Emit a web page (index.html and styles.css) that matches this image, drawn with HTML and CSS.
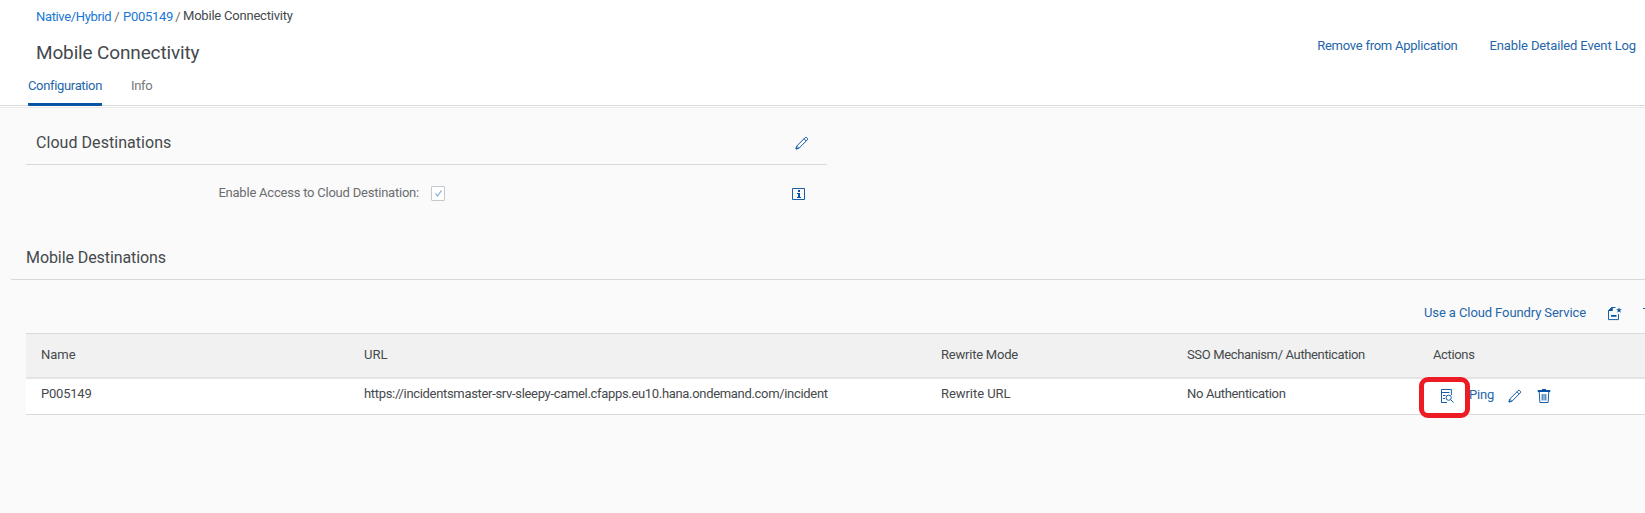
FILE: index.html
```
<!DOCTYPE html>
<html lang="en">
<head>
<meta charset="utf-8">
<title>Mobile Connectivity</title>
<link rel="stylesheet" href="styles.css">
</head>
<body>
<header class="page-header">
  <nav class="crumbs"><a class="crumb-link">Native/Hybrid</a><span class="sep">/</span><a class="crumb-id">P005149</a><span class="sep">/</span><span class="crumb-current">Mobile Connectivity</span></nav>
  <div class="title-row">
    <h1 class="title">Mobile Connectivity</h1>
    <div class="header-actions"><a class="remove">Remove from Application</a><a class="eventlog">Enable Detailed Event Log</a></div>
  </div>
  <div class="tabs"><a class="tab active">Configuration</a><a class="tab">Info</a></div>
</header>
<main class="content">
  <section class="cloud">
    <div class="cloud-head">
      <h2 class="heading cloud-title">Cloud Destinations</h2>
      <svg class="icon pencil" width="16" height="16" viewBox="0 0 16 16"><path d="M2 14l.7-2.9 8.4-8.4a1.2 1.2 0 0 1 1.7 0l.5.5a1.2 1.2 0 0 1 0 1.7l-8.4 8.4zM10 3.8l2.2 2.2M2.7 11.1l2.2 2.2M2 14l1.5-.4-1-1z"/></svg>
    </div>
    <div class="cloud-row">
      <span class="label">Enable Access to Cloud Destination:</span>
      <span class="checkbox"><svg width="9" height="9" viewBox="0 0 9 9"><path d="M1.5 4.5l2 2.5 4-5.5"/></svg></span>
      <svg class="icon info" width="14" height="14" viewBox="0 0 14 14"><path d="M.5 1.5h12v11H.5z"/><path class="solid" d="M6 3h2v2H6zM5 6h3v4h1v1H5v-1h1V7H5z"/></svg>
    </div>
  </section>
  <section class="mobile">
    <h2 class="heading mobile-title">Mobile Destinations</h2>
    <div class="toolbar">
      <a class="service">Use a Cloud Foundry Service</a>
      <svg class="icon" width="18" height="16" viewBox="0 0 18 16"><path d="M9.5 2.5H6L2.5 5.5v9.1h10V9M6 2.5v3H2.5"/><path class="solid" d="M2 6L6 2h.5v4zM5 10h5.5v1.7H5zM13 2.2l.7 2h2.2l-1.7 1.4.6 2.2-1.8-1.3-1.8 1.3.6-2.2-1.7-1.4h2.2z"/></svg>
      <svg class="icon more" width="14" height="16" viewBox="0 0 14 16"><path d="M0 3.5h14M3.5 3.5V13"/></svg>
    </div>
    <div class="table">
      <div class="row head"><span>Name</span><span>URL</span><span class="mode">Rewrite Mode</span><span class="sso">SSO Mechanism/ Authentication</span><span class="sso">Actions</span></div>
      <div class="row body"><span class="mode">P005149</span><span class="url">https://incidentsmaster-srv-sleepy-camel.cfapps.eu10.hana.ondemand.com/incident</span><span class="rewrite">Rewrite URL</span><span class="auth">No Authentication</span>
        <div class="row-actions">
          <svg class="icon view" width="15" height="16" viewBox="0 0 15 16"><path d="M7 14.5H1.5v-13h9.9V7M1.5 4.5h8M3 7.5h2.5M3 10.5h2"/><circle cx="8.7" cy="9.7" r="2.6"/><path d="M10.6 11.6l3 3"/></svg>
          <a class="ping">Ping</a>
          <svg class="icon edit" width="16" height="16" viewBox="0 0 16 16"><path d="M2 14l.7-2.9 8.4-8.4a1.2 1.2 0 0 1 1.7 0l.5.5a1.2 1.2 0 0 1 0 1.7l-8.4 8.4zM10 3.8l2.2 2.2M2.7 11.1l2.2 2.2M2 14l1.5-.4-1-1z"/></svg>
          <svg class="icon trash" width="14" height="16" viewBox="0 0 14 16"><path d="M2.2 4l.7 10.5h8.2L11.8 4M5.2 6v6.5M7 6v6.5M8.8 6v6.5"/><path class="solid" d="M.7 2H5V1h4v1h4.3v2H.7z"/></svg>
          <span class="highlight"></span>
        </div>
      </div>
    </div>
  </section>
</main>
</body>
</html>
```
FILE: styles.css
```
* { box-sizing: border-box; }
body { margin: 0; height: 513px; overflow: hidden; background: #fafafa; color: #45494d; font: 13px/16px Roboto, "Liberation Sans", sans-serif; }
h1, h2 { margin: 0; font-weight: 400; }
a { color: #1f66ab; }
.page-header { height: 106px; background: #fff; border-bottom: 1px solid #d9d9d9; box-shadow: 0 1px 0 #fff, 0 2px 0 #e8e8e8; }
.crumbs { display: flex; padding: 9px 0 0 36px; height: 37px; }
.crumbs a { color: #1a77d4; }
.crumb-link { width: 75px; letter-spacing: -.35px; }
.crumb-id { width: 49px; letter-spacing: -.27px; }
.sep { width: 12px; text-align: center; color: #6a6d70; }
.crumb-current { margin: -1px 0 0 -1px; letter-spacing: -.21px; }
.title-row { display: flex; justify-content: space-between; height: 39px; padding: 0 9px 0 36px; }
.title { padding-top: 1px; font-size: 19px; line-height: 30px; letter-spacing: -.15px; }
.header-actions { display: flex; gap: 32px; padding-top: 1px; }
.remove { letter-spacing: -.25px; }
.eventlog { letter-spacing: -.12px; }
.tabs { display: flex; gap: 29px; height: 30px; padding: 2px 0 0 28px; }
.tab { height: 28px; color: #74777a; letter-spacing: -.34px; }
.tab.active { color: #1f66ab; border-bottom: 3px solid #0854a0; border-radius: 1px; width: 74px; }
.icon { display: block; fill: none; stroke: #1760a8; stroke-width: 1; flex: none; }
.solid { fill: #0854a0; stroke: none; }
.heading { font-size: 16px; line-height: 20px; }
.content { padding-top: 20px; }
.cloud { width: 801px; margin-left: 26px; }
.cloud-head { display: flex; justify-content: space-between; height: 39px; padding: 7px 17px 0 10px; border-bottom: 1px solid #d9d9d9; }
.cloud-title { letter-spacing: .05px; }
.pencil { margin-top: 2px; }
.cloud-row { display: flex; height: 83px; padding-top: 20px; }
.label { width: 393px; text-align: right; color: #6a6d70; letter-spacing: -.22px; }
.checkbox { display: flex; align-items: center; justify-content: center; width: 14px; height: 15px; margin: 1px 0 0 12px; border: 1px solid #c4c9d0; border-radius: 1px; background: #fff; }
.checkbox path { fill: none; stroke: #7facdc; stroke-width: 1.2; }
.info { margin: 2px 0 0 347px; }
.mobile-title { height: 32px; margin-left: 11px; padding-left: 15px; border-bottom: 1px solid #d9d9d9; letter-spacing: -.08px; }
.toolbar { display: flex; height: 53px; padding: 25px 0 0 1424px; overflow: hidden; }
.service { width: 182px; flex: none; letter-spacing: -.1px; }
.more { margin-left: 19px; }
.table { margin-left: 26px; border-top: 1px solid #d9d9d9; }
.row { display: grid; grid-template-columns: 323px 577px 246px 246px 1fr; padding-left: 15px; }
.head { height: 45px; padding-top: 13px; background: #f1f1f1; border-bottom: 2px solid #e4e4e4; }
.body { height: 36px; padding-top: 7px; background: #fff; border-bottom: 1px solid #d9d9d9; }
.mode { letter-spacing: -.22px; }
.rewrite { letter-spacing: -.06px; }
.sso { letter-spacing: -.36px; }
.url { letter-spacing: -.32px; }
.auth { letter-spacing: -.34px; }
.row-actions { display: flex; position: relative; padding-left: 7px; }
.view { margin-top: 2px; }
.ping { margin: 1px 0 0 14px; width: 38px; letter-spacing: -.2px; }
.edit { margin: 2px 14px 0 0; }
.trash { margin-top: 2px; }
.highlight { position: absolute; left: -14px; top: -9px; width: 51px; height: 41px; border: 5px solid #ed1c24; border-radius: 9px; }
```
